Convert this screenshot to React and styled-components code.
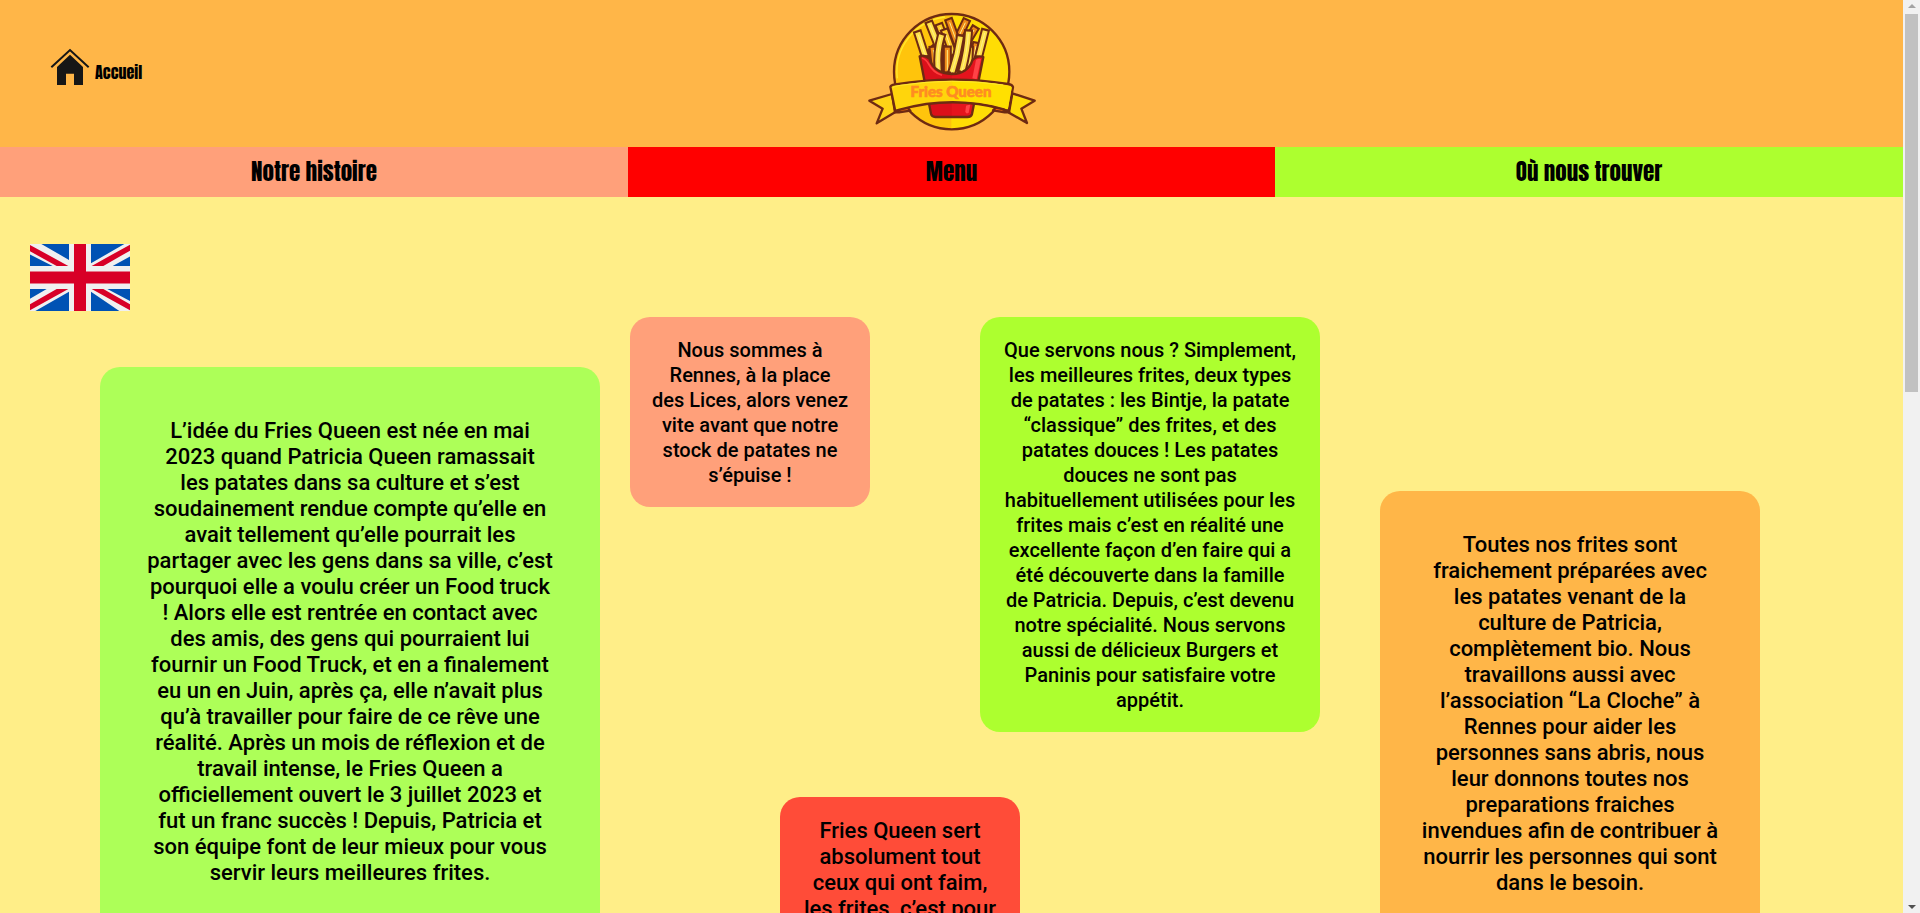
import React from 'react';
import styled, { createGlobalStyle } from 'styled-components';

const GlobalStyle = createGlobalStyle`
  *, *::before, *::after { box-sizing: border-box; }
  body { margin: 0; background: #ffee88; color: #000; font-family: Roboto, "Liberation Sans", sans-serif; }
  a { color: inherit; text-decoration: none; }
  svg { display: block; }
`;

const Window = styled.div`
  display: flex;
  height: 100vh;
  overflow: hidden;
`;

const Page = styled.div`
  flex: 1;
  min-width: 0;
  overflow: hidden;
`;

const ScrollBar = styled.div`
  width: 17px;
  flex: none;
  display: flex;
  flex-direction: column;
  align-items: center;
  justify-content: space-between;
  padding: 4px 0;
  background: #f1f1f1;
`;

const ScrollThumb = styled.div`
  width: 13px;
  height: 378px;
  margin-top: 6px;
  margin-bottom: auto;
  background: #c1c1c1;
`;

const Header = styled.header`
  display: grid;
  grid-template-columns: 1fr auto 1fr;
  align-items: start;
  background: #ffb648;
`;

const HomeLink = styled.a`
  display: flex;
  align-items: flex-end;
  justify-self: start;
  gap: 5px;
  margin: 48px 0 0 50px;
  font: 400 16px/28px Anton, Impact, "Roboto Condensed", sans-serif;
`;

const Nav = styled.nav`
  display: grid;
  grid-template-columns: 33fr 34fr 33fr;
`;

const NavLink = styled.a`
  background: ${(p) => p.$color};
  text-align: center;
  font: 400 23px/50px Anton, Impact, "Roboto Condensed", sans-serif;
`;

const LanguageLink = styled.a`
  display: block;
  width: 100px;
  margin: 47px 0 0 30px;
`;

const Board = styled.main`
  display: flex;
  align-items: flex-start;
  padding: 6px 100px 0;
`;

const Middle = styled.div`
  flex: none;
  margin: 0 60px 0 30px;
`;

const MiddleRow = styled.div`
  display: flex;
  align-items: flex-start;
  gap: 110px;
  margin-bottom: 65px;
`;

const Card = styled.p`
  flex: none;
  width: ${(p) => p.$width}px;
  margin: ${(p) => p.$drop || 0}px 0 0 ${(p) => p.$indent || 0}px;
  padding: ${(p) => (p.$pad || 20) + 1}px 10px ${(p) => (p.$pad || 20) - 1}px;
  border-radius: 20px;
  background: ${(p) => p.$color};
  text-align: center;
  white-space: pre-line;
  font-weight: 500;
  font-size: ${(p) => (p.$small ? 20 : 22)}px;
  line-height: ${(p) => (p.$small ? 25 : 26)}px;
`;

const story = `L’idée du Fries Queen est née en mai
2023 quand Patricia Queen ramassait
les patates dans sa culture et s’est
soudainement rendue compte qu’elle en
avait tellement qu’elle pourrait les
partager avec les gens dans sa ville, c’est
pourquoi elle a voulu créer un Food truck
! Alors elle est rentrée en contact avec
des amis, des gens qui pourraient lui
fournir un Food Truck, et en a finalement
eu un en Juin, après ça, elle n’avait plus
qu’à travailler pour faire de ce rêve une
réalité. Après un mois de réflexion et de
travail intense, le Fries Queen a
officiellement ouvert le 3 juillet 2023 et
fut un franc succès ! Depuis, Patricia et
son équipe font de leur mieux pour vous
servir leurs meilleures frites.`;

const place = `Nous sommes à
Rennes, à la place
des Lices, alors venez
vite avant que notre
stock de patates ne
s’épuise !`;

const food = `Que servons nous ? Simplement,
les meilleures frites, deux types
de patates : les Bintje, la patate
“classique” des frites, et des
patates douces ! Les patates
douces ne sont pas
habituellement utilisées pour les
frites mais c’est en réalité une
excellente façon d’en faire qui a
été découverte dans la famille
de Patricia. Depuis, c’est devenu
notre spécialité. Nous servons
aussi de délicieux Burgers et
Paninis pour satisfaire votre
appétit.`;

const everyone = `Fries Queen sert
absolument tout
ceux qui ont faim,
les frites, c’est pour`;

const organic = `Toutes nos frites sont
fraichement préparées avec
les patates venant de la
culture de Patricia,
complètement bio. Nous
travaillons aussi avec
l’association “La Cloche” à
Rennes pour aider les
personnes sans abris, nous
leur donnons toutes nos
preparations fraiches
invendues afin de contribuer à
nourrir les personnes qui sont
dans le besoin.`;

function HomeIcon() {
  return (
    <svg width="40" height="38" viewBox="150 144 120 114" aria-hidden="true">
      <path d="M154 202 210 150 266 202" fill="none" stroke="#161616" strokeWidth="6" />
      <path d="M171 255V201L210 164 249 201V255H222V221H198V255Z" fill="#161616" />
    </svg>
  );
}

// Each fry is a centre line and a fill colour, listed from back to front.
const fries = [
  ['M316 68 296 110', '#ef8a17'],
  ['M240 82 258 130', '#ffc927'],
  ['M342 90 318 130', '#ef8a17'],
  ['M348 138 338 190', '#ef8a17'],
  ['M220 150 226 200', '#ef8a17'],
  ['M210 75 234 135', '#ffe24b'],
  ['M175 104 195 166', '#ffe24b'],
  ['M269 67 290 125', '#ef8a17'],
  ['M374 99 357 166', '#ffe24b'],
  ['M256 98 278 160', '#ffc927'],
  ['M328 150 326 205', '#ffd83b'],
  ['M262 150 262 212', '#ef8a17'],
  ['M243 111Q229 158 235 216', '#ffe24b'],
  ['M300 116Q292 170 275 218', '#ffe24b'],
  ['M325 101Q322 155 305 216', '#ffe24b'],
];

function Logo() {
  return (
    <svg width="170" height="147" viewBox="21 0 510 441" role="img" aria-label="Fries Queen">
      <defs>
        <clipPath id="disc"><circle cx="275" cy="215" r="172" /></clipPath>
      </defs>
      <circle cx="275" cy="215" r="172" fill="#ffdd05" />
      <rect x="100" y="40" width="174" height="350" fill="#ffc40c" clipPath="url(#disc)" />
      <path d="M112 235A165 165 0 0 1 255 51" fill="none" stroke="#ffe92e" strokeWidth="4" />
      <circle cx="275" cy="215" r="173" fill="none" stroke="#6e2a12" strokeWidth="7" />
      <path d="M190 160 230 120 330 120 352 165 330 215 230 215Z" fill="#6e2a12" />
      {fries.map(([line, color]) => (
        <g key={line} fill="none">
          <path d={line} stroke="#6e2a12" strokeWidth="27" strokeLinecap="square" />
          <path d={line} stroke={color} strokeWidth="15" strokeLinecap="square" pathLength="100" strokeDasharray="90 100" strokeDashoffset="-1" />
          <path d={line} stroke="#fff08a" strokeWidth="3" />
        </g>
      ))}
      <path d="M179 169Q194 163 208 176C218 207 245 221 275 222C306 223 329 207 337 181Q352 164 370 171L336 342Q334 351 322 351H226Q215 350 213 341Z" fill="#db101a" />
      <path d="M275 223C306 223 329 207 337 181Q352 164 370 171L336 342Q334 351 322 351H275Z" fill="#e5141d" />
      <path d="M186 174Q198 178 206 192Q219 217 246 226" fill="none" stroke="#ff3e3d" strokeWidth="5" />
      <path d="M348 179Q360 174 363 178L350 238 337 235Z" fill="#ff4347" />
      <path d="M318 317 331 313 326 338Q317 344 316 334Z" fill="#ff4347" />
      <path d="M179 169Q194 163 208 176C218 207 245 221 275 222C306 223 329 207 337 181Q352 164 370 171L336 342Q334 351 322 351H226Q215 350 213 341Z" fill="none" stroke="#6e2a12" strokeWidth="7" strokeLinejoin="round" />
      <g stroke="#6e2a12" strokeWidth="7" strokeLinejoin="round">
        <path d="M28 302 96 282 105 337 50 370 68 326Z" fill="#ffd316" />
        <path d="M524 302 457 280 447 338 501 369 484 326Z" fill="#ffdb08" />
        <path d="M104 337 139 319 151 332 117 337Z" fill="#e8650c" />
        <path d="M448 337 412 319 399 331 434 337Z" fill="#e8650c" />
        <path d="M91 260Q94 254 106 253Q275 225 444 252Q457 254 459 261L447 328Q443 335 432 328Q277 285 119 329Q108 333 105 329Z" fill="#ffd50c" />
      </g>
      <path d="M277 243Q363 243 444 257Q455 259 455 264L444 325Q442 329 432 323Q360 302 277 302Z" fill="#ffe000" />
      <path d="M98 263Q104 258 121 256Q275 232 430 255" fill="none" stroke="#ffe92e" strokeWidth="3" />
      <text x="273" y="290" textAnchor="middle" fontFamily="Lato, sans-serif" fontWeight="900" fontSize="45" fill="#ff8c22" stroke="#ff8c22" strokeWidth="2">Fries Queen</text>
    </svg>
  );
}

function UkFlag() {
  return (
    <svg width="100" height="67" viewBox="0 0 300 202" preserveAspectRatio="none" role="img" aria-label="English">
      <path fill="#f0f0f0" d="M0 0H300V202H0Z" />
      <path fill="#0052b4" d="M34 0H117V48ZM0 32 68 66H0ZM183 0H283L183 58ZM300 38V66H248ZM0 136H50L0 165ZM117 144V202H16ZM183 144V202H268ZM232 136H300V172Z" />
      <path fill="#d80027" d="M0 3 115 66H80L0 22ZM300 2V20L220 66H185ZM0 200V182L80 136H115ZM300 200V182L220 136H185Z" />
      <path fill="#d80027" d="M132 0H168V83H300V119H168V202H132V119H0V83H132Z" />
    </svg>
  );
}

export default function App() {
  return (
    <Window>
      <GlobalStyle />
      <Page>
        <Header>
          <HomeLink href="#accueil"><HomeIcon />Accueil</HomeLink>
          <Logo />
        </Header>
        <Nav>
          <NavLink href="#histoire" $color="#ffa07a">Notre histoire</NavLink>
          <NavLink href="#menu" $color="#ff0000">Menu</NavLink>
          <NavLink href="#trouver" $color="#adff2f">Où nous trouver</NavLink>
        </Nav>
        <LanguageLink href="#en"><UkFlag /></LanguageLink>
        <Board>
          <Card $width={500} $drop={50} $pad={50} $color="#adff58">{story}</Card>
          <Middle>
            <MiddleRow>
              <Card $small $width={240} $color="#ffa07a">{place}</Card>
              <Card $small $width={340} $color="#adff2f">{food}</Card>
            </MiddleRow>
            <Card $width={240} $indent={150} $color="#ff4c38">{everyone}</Card>
          </Middle>
          <Card $width={380} $drop={174} $pad={40} $color="#ffb648">{organic}</Card>
        </Board>
      </Page>
      <ScrollBar aria-hidden="true">
        <svg width="8" height="4" viewBox="0 0 8 4"><path d="M0 4 4 0 8 4Z" fill="#a3a3a3" /></svg>
        <ScrollThumb />
        <svg width="8" height="4" viewBox="0 0 8 4"><path d="M0 0H8L4 4Z" fill="#505050" /></svg>
      </ScrollBar>
    </Window>
  );
}
